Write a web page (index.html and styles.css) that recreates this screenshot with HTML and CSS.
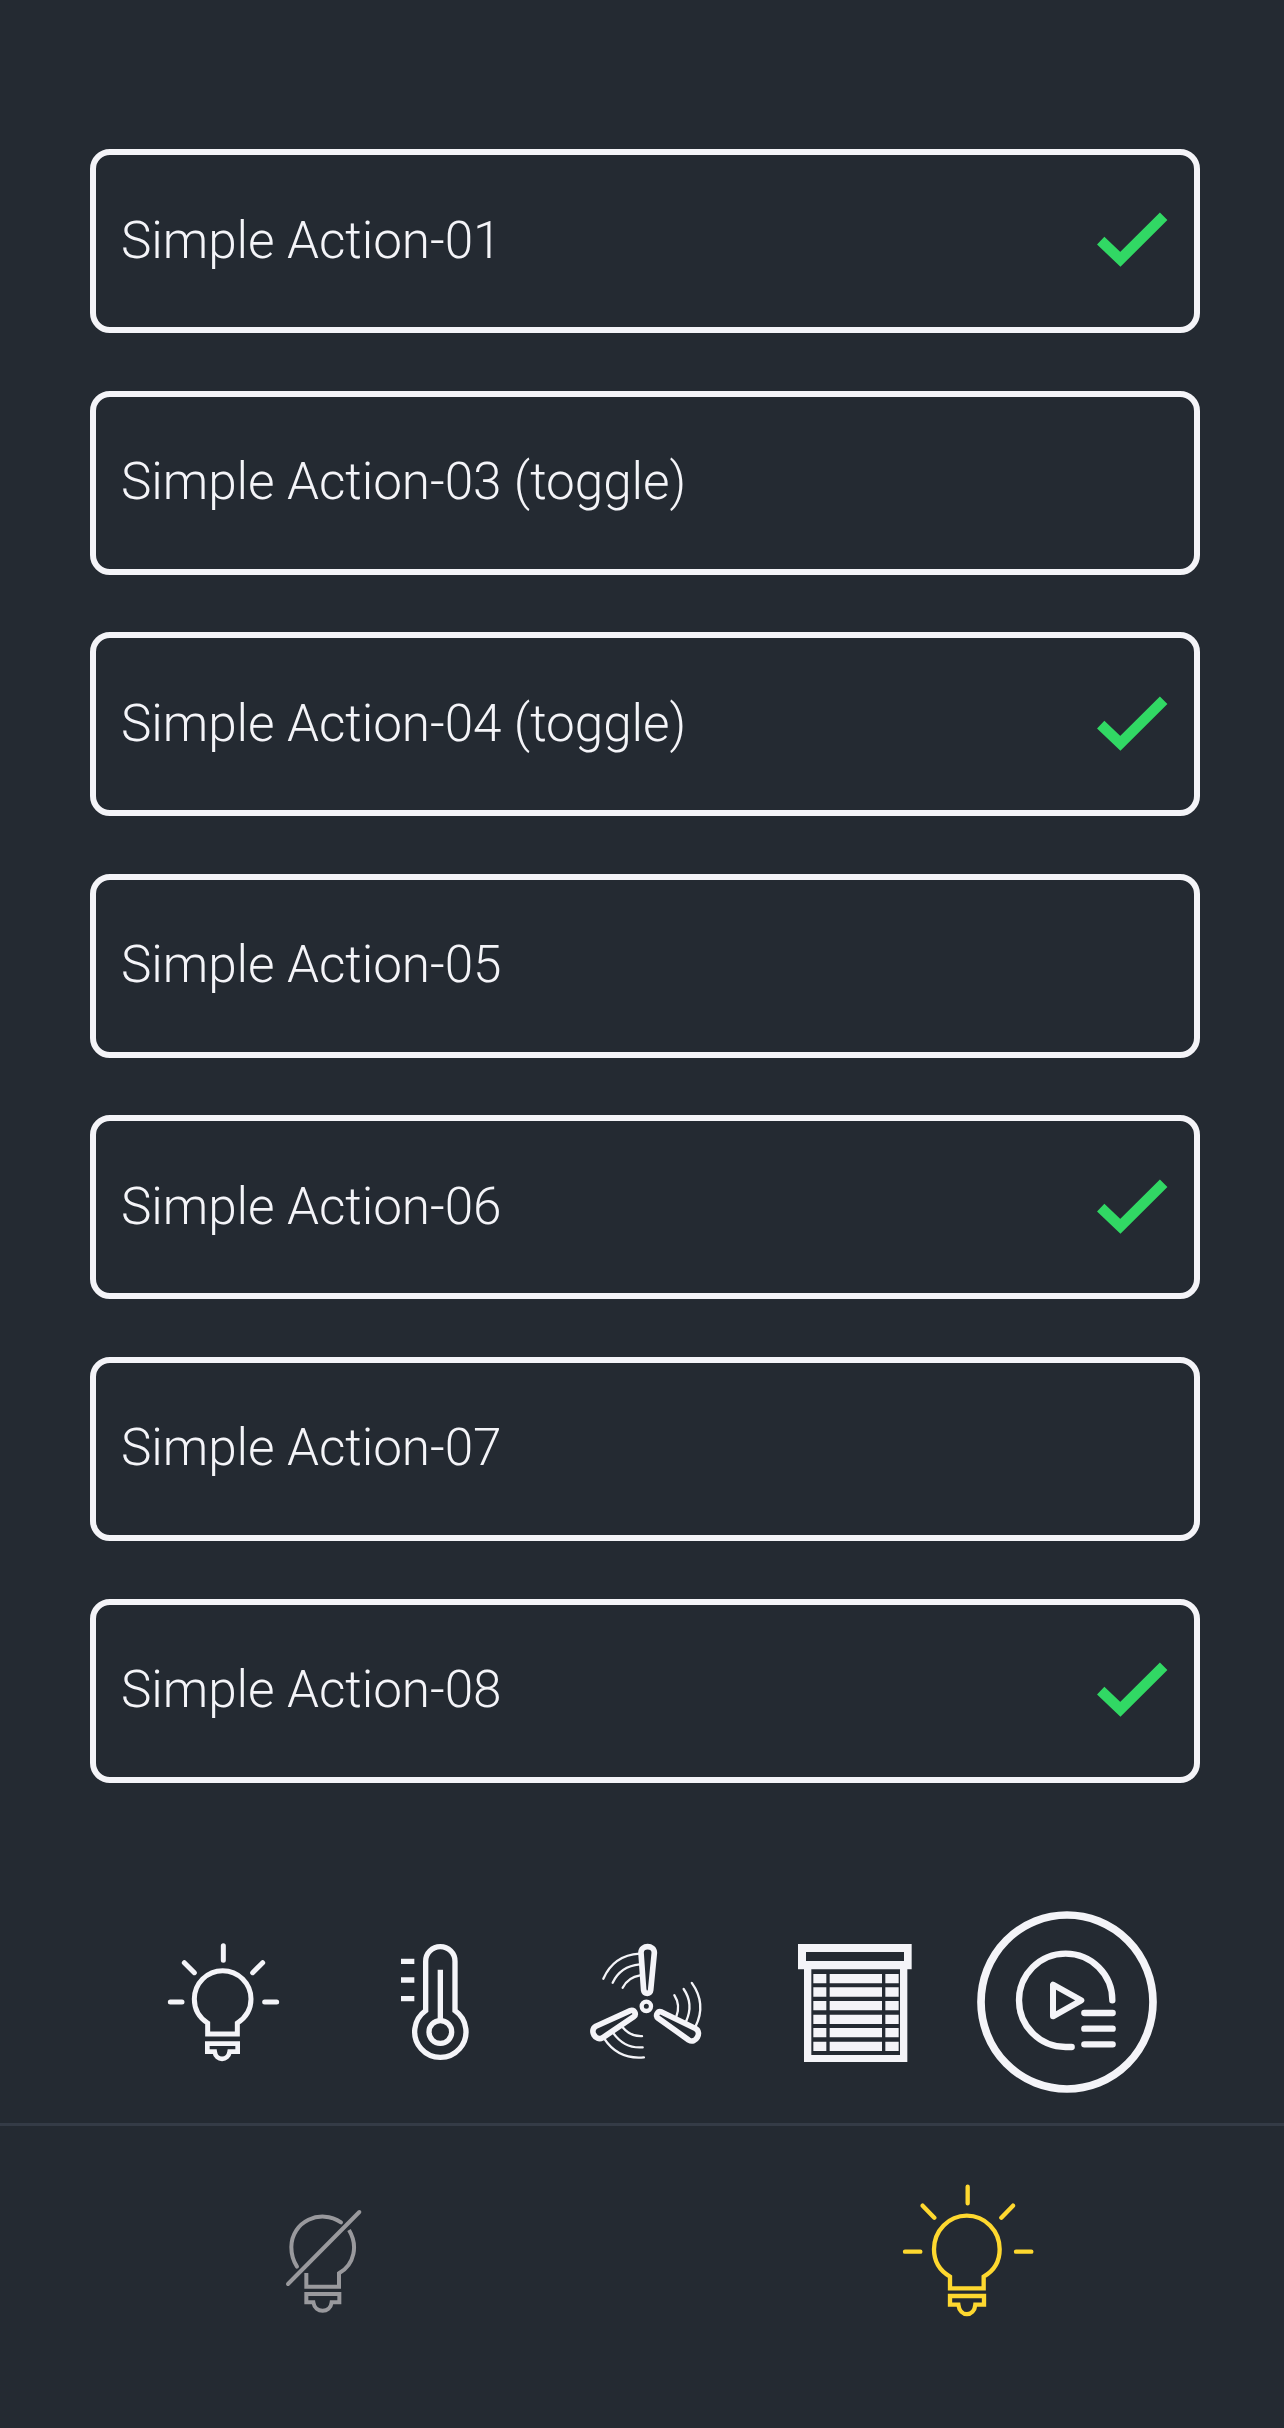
FILE: index.html
```
<!DOCTYPE html>
<html lang="en">
<head>
<meta charset="utf-8">
<meta name="viewport" content="width=device-width">
<title>Actions</title>
<link rel="stylesheet" href="styles.css">
</head>
<body>
<main class="actions">
  <div class="action"><span>Simple Action-01</span><svg class="check" viewBox="172 217 212 166"><path d="M183 303L242 359L372 230"/></svg></div>
  <div class="action"><span>Simple Action-03 (toggle)</span></div>
  <div class="action"><span>Simple Action-04 (toggle)</span><svg class="check" viewBox="172 217 212 166"><path d="M183 303L242 359L372 230"/></svg></div>
  <div class="action"><span>Simple Action-05</span></div>
  <div class="action"><span>Simple Action-06</span><svg class="check" viewBox="172 217 212 166"><path d="M183 303L242 359L372 230"/></svg></div>
  <div class="action"><span>Simple Action-07</span></div>
  <div class="action"><span>Simple Action-08</span><svg class="check" viewBox="172 217 212 166"><path d="M183 303L242 359L372 230"/></svg></div>
</main>
<nav class="tabs">
  <svg class="tab" viewBox="-54 -27 546 546">
    <g stroke-width="15">
      <path d="M173 342V309C148 293 133 268 133 237A85 85 0 0 1 303 237C303 268 287 293 262 309V342Z"/>
      <path stroke-width="14" d="M172 371H263V395H239C234 424 198 424 194 395H172Z"/>
      <path stroke-linecap="round" d="M220 77V121M103 128L133 158M338 128L308 158M61 246H96M344 246H380"/>
    </g>
  </svg>
  <svg class="tab" viewBox="-111 -27 546 546">
    <g stroke-width="16">
      <path d="M137 272V124A44 44 0 0 1 225 124V272A77 77 0 1 1 137 272Z"/>
      <circle cx="181" cy="336" r="34"/>
      <path d="M181 149V302M63 124H103M63 180H103M63 236H103"/>
    </g>
  </svg>
  <svg class="tab" viewBox="-48 -27 546 546">
    <circle cx="229" cy="259" r="14" stroke-width="13"/>
    <g id="blade">
      <path stroke-width="17" stroke-linejoin="round" d="M213 98C213 74 253 74 253 98L242 211C241 223 223 223 221 211Z"/>
      <path stroke-width="7" stroke-linecap="round" d="M208 101C157 104 121 130 100 176M209 133C169 137 144 154 128 188M210 166C184 170 169 182 158 203"/>
    </g>
    <use href="#blade" transform="rotate(120 229 259)"/>
    <use href="#blade" transform="rotate(240 229 259)"/>
  </svg>
  <svg class="tab" viewBox="-45 -27 546 546">
    <path class="solid" fill-rule="evenodd" d="M54 72H395V148H382V426H72V148H54ZM78 96V123H372V96ZM94 148V405H360V148Z"/>
    <path stroke-width="28" d="M100 176H139M149 176H306M316 176H356M100 216H139M149 216H306M316 216H356M100 257H139M149 257H306M316 257H356M100 298H139M149 298H306M316 298H356M100 338H139M149 338H306M316 338H356M100 379H139M149 379H306M316 379H356"/>
  </svg>
  <svg class="tab" viewBox="48 63 546 546">
    <ellipse cx="321" cy="336" rx="258" ry="261" stroke-width="23"/>
    <g stroke-width="19" stroke-linecap="round" stroke-linejoin="round">
      <path d="M457 331A140 140 0 1 0 317 471H335"/>
      <path d="M279 284V379L364 331Z" stroke-width="18"/>
      <path d="M373 369H458M373 416H458M373 463H458"/>
    </g>
  </svg>
</nav>
<footer class="switches">
  <svg class="switch off" viewBox="-57 -30 480 480">
    <g stroke-width="12">
      <path stroke-linecap="round" d="M84 312L298 96M243 127C181 85 95 124 94 201C94 223 100 243 111 260"/>
      <path d="M267 150C294 195 285 252 237 280V320H139V279"/>
      <path d="M139 342H238V367H215C211 401 165 401 160 367H139Z"/>
    </g>
  </svg>
  <svg class="switch on" viewBox="-21 0 480 480">
    <g stroke-width="13">
      <path d="M180 355V320C149 302 132 272 132 238A98.500 101 0 0 1 329 238C329 272 313 302 281 320V355Z"/>
      <path d="M180 378H282V404H256C252 442 210 442 205 404H180Z"/>
      <path stroke-linecap="round" d="M233 50V100M98 107L133 143M369 107L334 143M45 245H91M378 245H424"/>
    </g>
  </svg>
</footer>
</body>
</html>
```
FILE: styles.css
```
* { box-sizing: border-box; }
body {
  margin: 0;
  height: 2428px;
  background: #242a32;
  color: #f4f4f8;
  font-family: Roboto, "Liberation Sans", sans-serif;
  font-weight: 300;
  display: flex;
  flex-direction: column;
}
svg { display: block; fill: none; stroke: currentColor; }
.actions {
  display: flex;
  flex-direction: column;
  gap: 57.6px;
  padding: 149px 84px 0 90px;
}
.action {
  height: 184px;
  border: 6px solid #f4f4f8;
  border-radius: 20px;
  display: flex;
  align-items: center;
  justify-content: space-between;
  padding: 0 26px 0 25px;
  font-size: 51.3px;
  letter-spacing: -0.07px;
  line-height: 60px;
  white-space: nowrap;
}
.action span { padding-bottom: 1px; }
.check { width: 70.7px; height: 55.3px; margin-bottom: 2px; color: #31d864; stroke-width: 32; }
.tabs {
  display: grid;
  grid-template-columns: repeat(5, 182px);
  column-gap: 29px;
  padding: 128px 0 30px 132px;
  border-bottom: 3px solid #343b46;
}
.tab { width: 182px; height: 182px; }
.solid { fill: currentColor; stroke: none; }
.switches {
  display: grid;
  grid-template-columns: 1fr 1fr;
  justify-items: center;
  padding-top: 44px;
}
.switch { width: 160px; height: 160px; }
.off { color: #99999d; }
.on { color: #fed82f; }
```
